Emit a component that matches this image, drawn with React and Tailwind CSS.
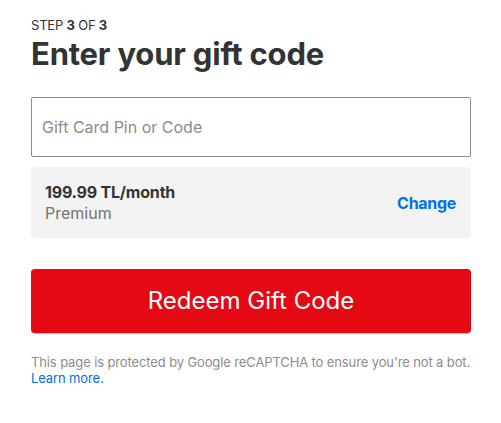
export default function App() {
  return (
    <div className="w-[501px] h-[423px] bg-white" style={{ fontFamily: 'Inter, "Liberation Sans", sans-serif' }}>
      <div className="pl-[31px] pr-[30px] pt-[17px]">
        <div className="text-[13px] leading-[16px] text-[#333] tracking-[-0.2px]">
          STEP <b>3</b> OF <b>3</b>
        </div>
        <h1 className="mt-[2px] text-[31px] leading-[38px] font-bold text-[#333] tracking-[-0.2px]">Enter your gift code</h1>
        <div className="mt-[24px] h-[60px] border border-[#8c8c8c] rounded-[2px] flex items-center px-[10px]">
          <span className="text-[16px] text-[#8c8c8c]">Gift Card Pin or Code</span>
        </div>
        <div className="mt-[10px] h-[71px] bg-[#f3f3f3] rounded-[4px] flex items-center justify-between pl-[14px] pr-[15px]">
          <div className="flex flex-col">
            <span className="text-[16px] leading-[20px] font-bold text-[#333] tracking-[-0.2px]">199.99 TL/month</span>
            <span className="text-[16px] leading-[22px] text-[#737373]">Premium</span>
          </div>
          <span className="text-[16px] font-bold text-[#0071eb] tracking-[-0.3px]">Change</span>
        </div>
        <div className="mt-[31px] h-[64px] bg-[#e50914] rounded-[4px] shadow-[0_1px_1px_rgba(0,0,0,0.25)] flex items-center justify-center">
          <span className="text-[24px] text-white">Redeem Gift Code</span>
        </div>
        <p className="mt-[21px] text-[13px] leading-[16px] text-[#8c8c8c] tracking-[-0.12px] whitespace-nowrap">
          This page is protected by Google reCAPTCHA to ensure you're not a bot.<br />
          <span className="text-[#0071eb]">Learn more.</span>
        </p>
      </div>
    </div>
  );
}
